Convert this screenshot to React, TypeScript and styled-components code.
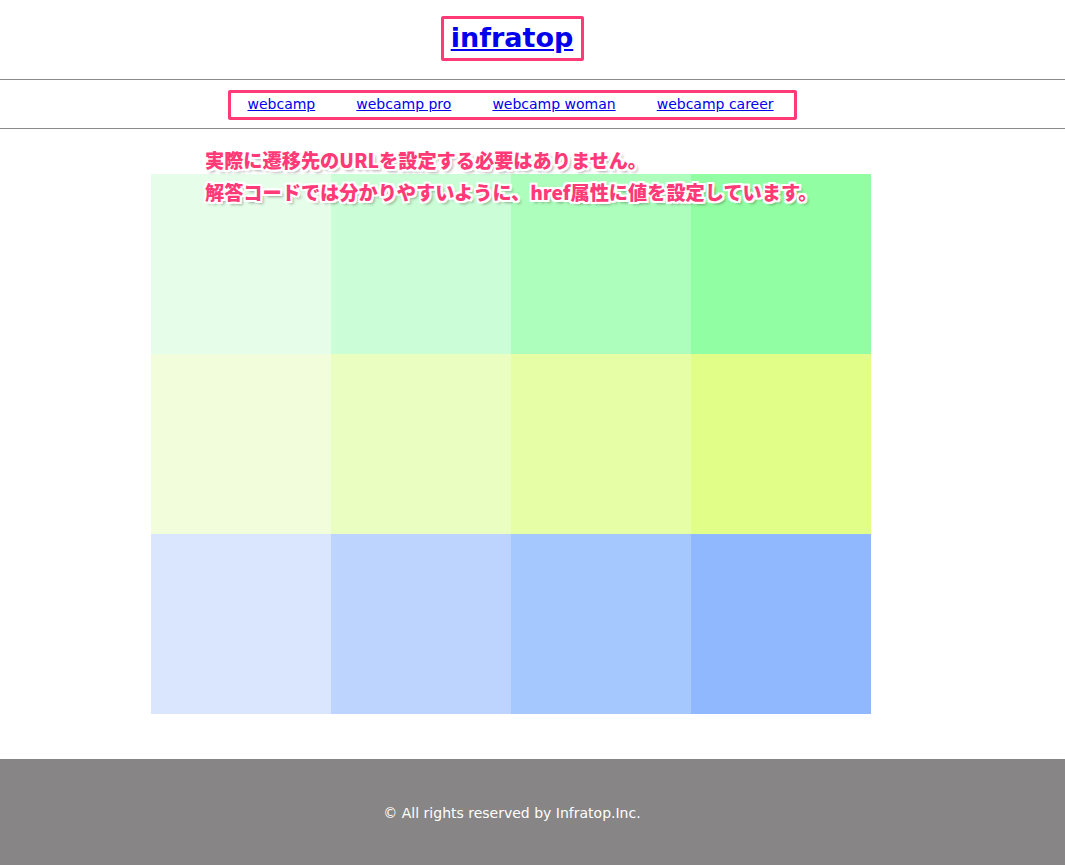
import React from 'react';
import styled, { createGlobalStyle } from 'styled-components';

const GlobalStyle = createGlobalStyle`
  html, body {
    margin: 0;
    padding: 0;
    background: #fff;
    font-family: 'DejaVu Sans', Verdana, sans-serif;
  }
`;

const pink = '#ff3a76';

const palette = [
  ['#e6fee9', '#cbfdd6', '#adfebd', '#92fea3'],
  ['#f2fedb', '#ebfec2', '#e6fea5', '#e1fe89'],
  ['#dae5fe', '#bdd5fe', '#a5c8fe', '#8fb8fe'],
];

const links = ['webcamp', 'webcamp pro', 'webcamp woman', 'webcamp career'];

const App = () => {
  return (
    <Page>
      <GlobalStyle />
      <Header>
        <Inner>
          <TitleBox>
            <a href='#'>infratop</a>
          </TitleBox>
        </Inner>
      </Header>
      <Nav>
        <Inner>
          <NavBox>
            {links.map((l) => (
              <a href='#' key={l}>
                {l}
              </a>
            ))}
          </NavBox>
        </Inner>
      </Nav>
      <Main>
        <Inner>
          <Grid>
            {palette.flat().map((c, i) => (
              <Cell key={i} $color={c} />
            ))}
          </Grid>
        </Inner>
        <Note>
          実際に遷移先のURLを設定する必要はありません。
          <br />
          解答コードでは分かりやすいように、href属性に値を設定しています。
        </Note>
      </Main>
      <Footer>
        <Inner>
          <p>© All rights reserved by Infratop.Inc.</p>
        </Inner>
      </Footer>
    </Page>
  );
};

const Page = styled.div`
  width: 1065px;
  min-height: 865px;
`;

const Inner = styled.div`
  width: 1024px;
  display: flex;
  justify-content: center;
`;

const Header = styled.header`
  height: 80px;
  box-sizing: border-box;
  padding-top: 16px;
  border-bottom: 1px solid #8a8a8a;
`;

const TitleBox = styled.h1`
  margin: 0;
  box-sizing: border-box;
  width: 143px;
  height: 45px;
  border: 3px solid ${pink};
  border-radius: 2px;
  display: flex;
  align-items: center;
  justify-content: center;
  a {
    color: #0000ee;
    font-size: 27px;
    font-weight: 700;
    line-height: 1;
    padding-bottom: 3px;
  }
`;

const Nav = styled.nav`
  height: 49px;
  box-sizing: border-box;
  padding-top: 10px;
  border-bottom: 1px solid #8a8a8a;
`;

const NavBox = styled.div`
  box-sizing: border-box;
  width: 569px;
  height: 30px;
  border: 3px solid ${pink};
  border-radius: 2px;
  display: flex;
  align-items: center;
  padding: 0 0 3px 17px;
  gap: 41px;
  a {
    color: #0000ee;
    font-size: 14px;
  }
`;

const Main = styled.main`
  position: relative;
  padding: 45px 0 45px;
`;

const Grid = styled.div`
  display: grid;
  grid-template-columns: repeat(4, 180px);
  grid-auto-rows: 180px;
  margin-left: -2px;
`;

const Cell = styled.div<{ $color: string }>`
  background: ${(p) => p.$color};
`;

const Note = styled.p`
  position: absolute;
  top: 15px;
  left: 205px;
  margin: 0;
  color: ${pink};
  font-family: 'Noto Sans CJK JP', sans-serif;
  font-weight: 900;
  font-size: 19.2px;
  line-height: 32px;
  text-shadow: 2px 2px 0 #fff, -2px -2px 0 #fff, 2px -2px 0 #fff,
    -2px 2px 0 #fff, 0 2px 0 #fff, 2px 0 0 #fff, 0 -2px 0 #fff,
    -2px 0 0 #fff, 3px 3px 3px rgba(0, 0, 0, 0.35);
  white-space: nowrap;
`;

const Footer = styled.footer`
  background: #878585;
  height: 106px;
  display: flex;
  align-items: center;
  p {
    margin: 0;
    color: #fff;
    font-size: 14px;
    padding-top: 2px;
  }
`;

export default App;
